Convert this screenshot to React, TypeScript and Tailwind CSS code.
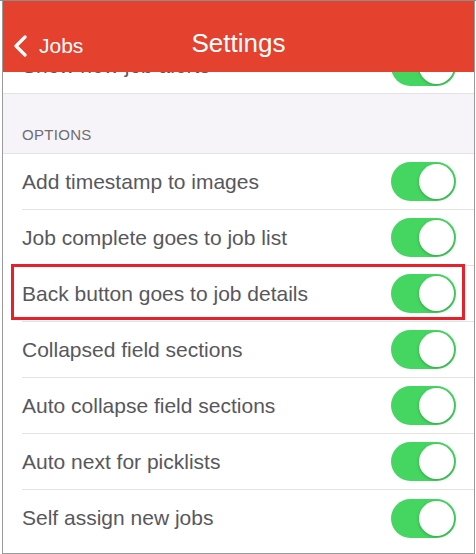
import React from "react";

const rows = [
  "Add timestamp to images",
  "Job complete goes to job list",
  "Back button goes to job details",
  "Collapsed field sections",
  "Auto collapse field sections",
  "Auto next for picklists",
  "Self assign new jobs",
];

function Toggle() {
  return (
    <div className="relative h-[39px] w-[65px] shrink-0 rounded-full bg-[#44d660]">
      <div className="absolute right-[2px] top-[2px] h-[35px] w-[35px] rounded-full bg-white shadow-[0_1px_3px_rgba(0,0,0,0.25)]" />
    </div>
  );
}

function Row({ label, highlight, last }: { label: string; highlight?: boolean; last?: boolean }) {
  return (
    <div className="relative h-[56px] bg-white pl-[19px]">
      <div className={`flex h-full items-center justify-between pr-[18px] ${last ? "" : "border-b border-[#e3e3e6]"}`}>
        <span className="text-[21px] text-[#58585c]">{label}</span>
        <Toggle />
      </div>
      {highlight && (
        <div className="pointer-events-none absolute left-[8px] right-[9px] top-[-2px] h-[56px] border-[3px] border-[#e8202a]" />
      )}
    </div>
  );
}

export default function App() {
  return (
    <div
      className="relative h-[554px] w-[476px] overflow-hidden bg-white"
      style={{ fontFamily: '"Liberation Sans", Arial, sans-serif' }}
    >
      <div className="flex h-full flex-col border-t border-[#8c8c8c] pl-[2px] pr-[1px]">
        <div className="flex h-full flex-col border-b border-l border-r border-[#9a9a9a]">
          {/* Header */}
          <div className="relative flex h-[71px] shrink-0 items-center justify-center bg-[#e4412e] pt-[13px]">
            <div className="absolute left-[10px] top-[9px] flex h-full items-center gap-[10px]">
              <svg width="16" height="22" viewBox="0 0 16 22" fill="none">
                <path d="M12 2 L3 11 L12 20" stroke="white" strokeWidth="3.2" strokeLinecap="round" strokeLinejoin="round" />
              </svg>
              <span className="text-[21px] text-white">Jobs</span>
            </div>
            <span className="text-[26px] text-white">Settings</span>
          </div>
          {/* clipped row */}
          <div className="h-[22px] shrink-0 overflow-hidden border-b border-[#e3e3e6] bg-white">
            <div className="-mt-[34px] flex h-[56px] items-center justify-between pl-[19px] pr-[18px]">
              <span className="text-[21px] text-[#58585c]">Show new job alerts</span>
              <Toggle />
            </div>
          </div>
          {/* Section header */}
          <div className="flex h-[60px] shrink-0 items-end border-b border-[#e3e3e6] bg-[#f6f4f8] pb-[7px] pl-[19px]">
            <span className="text-[15px] tracking-[0.3px] text-[#6d6d72]">OPTIONS</span>
          </div>
          {rows.map((r, i) => (
            <Row key={r} label={r} highlight={i === 2} last={i === rows.length - 1} />
          ))}
          <div className="flex-1 bg-white" />
        </div>
      </div>
    </div>
  );
}
